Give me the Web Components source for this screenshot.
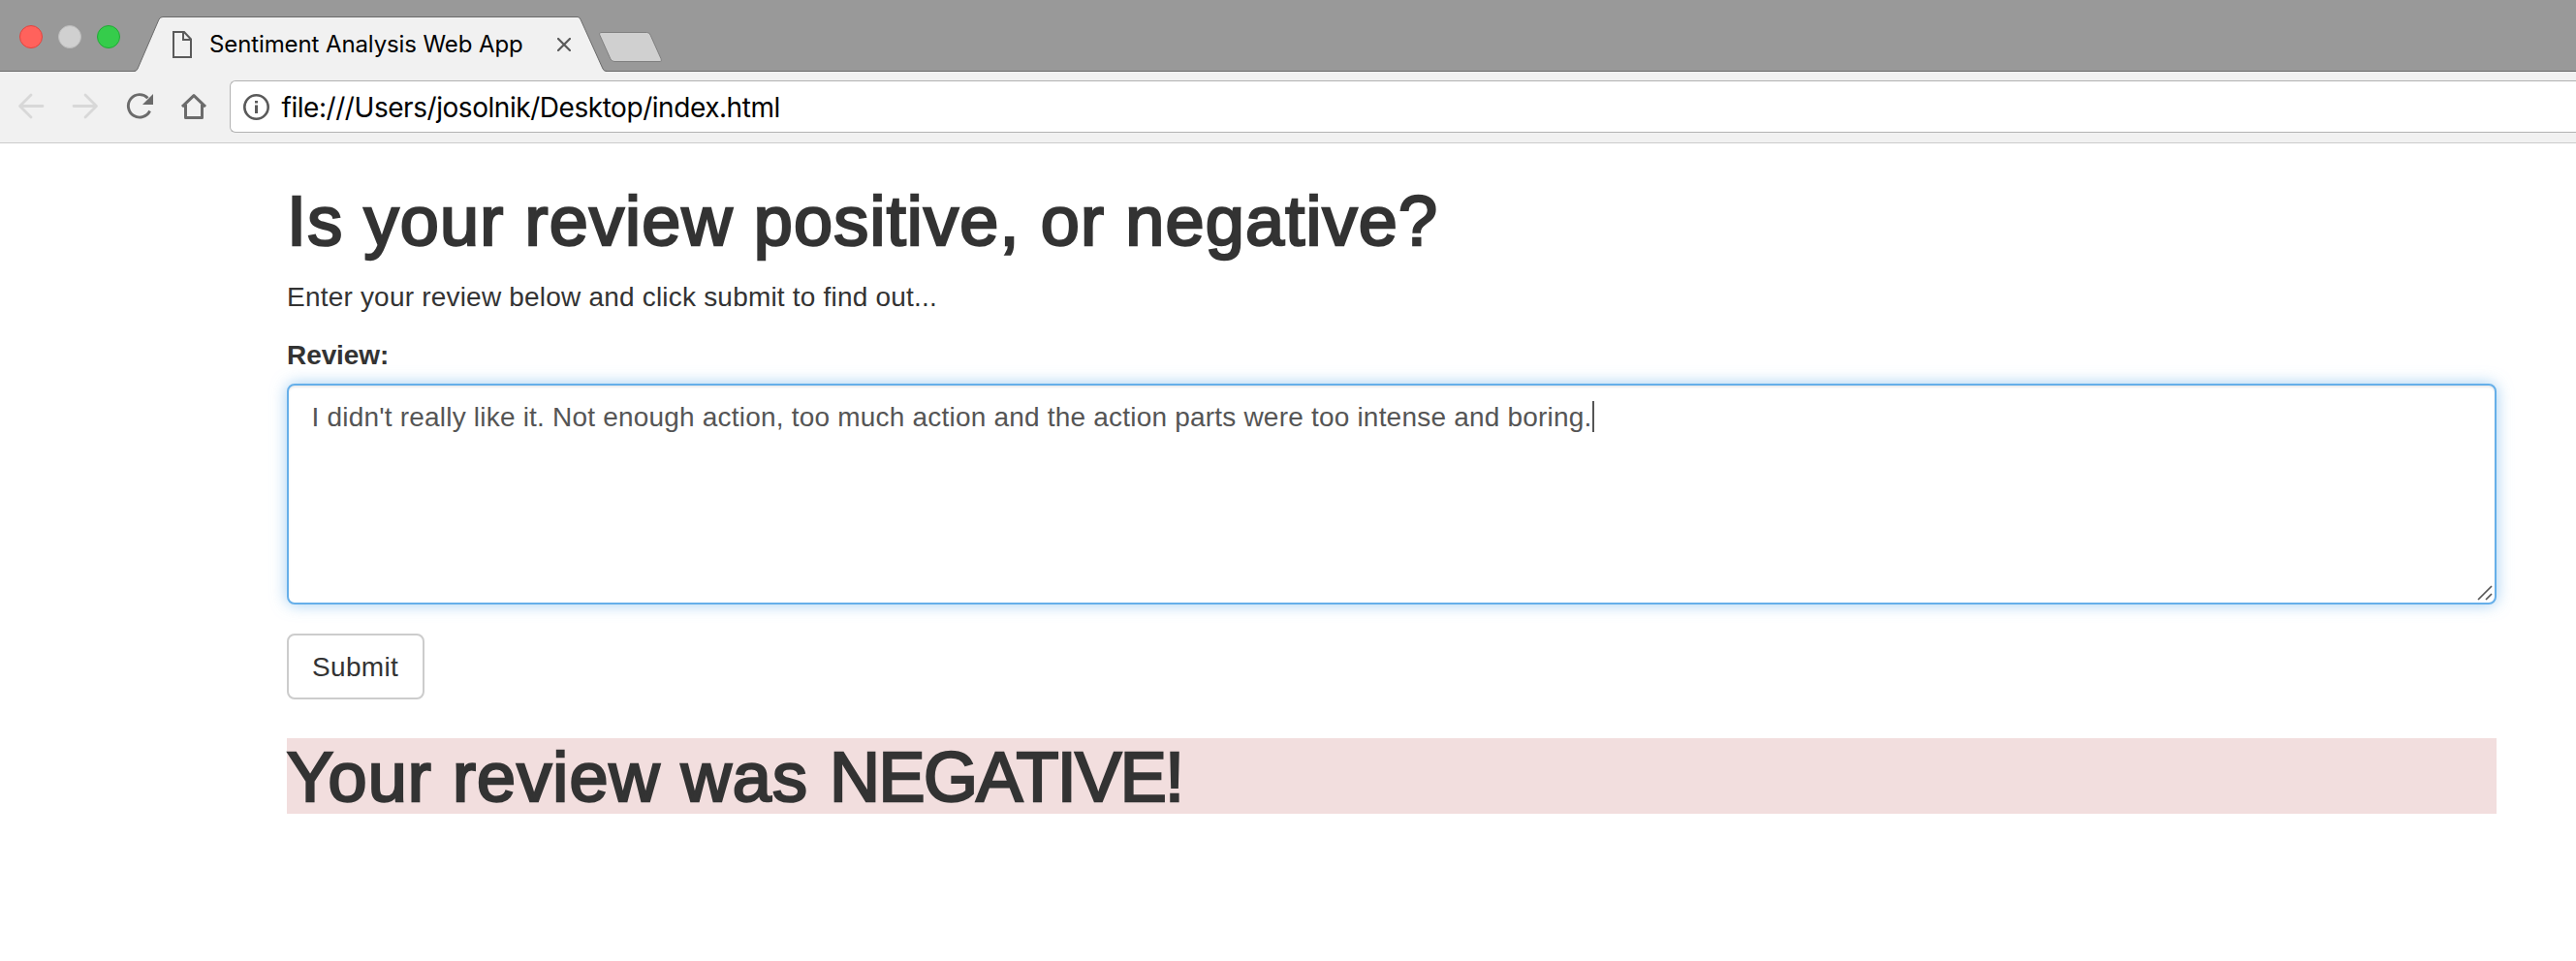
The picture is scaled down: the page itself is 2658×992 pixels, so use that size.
<!DOCTYPE html>
<html lang="en">
<head>
<meta charset="utf-8">
<title>Sentiment Analysis Web App</title>
<style>
html,body{margin:0;background:#fff;overflow:hidden}
body{height:992px;font:28px/40px "Liberation Sans",Arial,sans-serif;color:#333}
</style>
</head>
<body>
<browser-frame>
  <tab-strip slot="tabs"><fit-text start="0" width="322">Sentiment Analysis Web App</fit-text></tab-strip>
  <tool-bar slot="tools"><fit-text start="-0.5" width="513">file:///Users/josolnik/Desktop/index.html</fit-text></tool-bar>
  <review-page></review-page>
</browser-frame>
<script>
const define = (name, html, extra) => customElements.define(name, class extends HTMLElement {
  constructor() {
    super();
    const t = document.createElement('template');
    t.innerHTML = html;
    this.attachShadow({ mode: 'open' }).append(t.content.cloneNode(true));
  }
  connectedCallback() { if (extra) extra(this); }
});

define('browser-frame', `<style>
:host{display:flex;flex-direction:column;width:100%;height:992px}
</style><slot name="tabs"></slot><slot name="tools"></slot><slot></slot>`);

define('tab-strip', `<style>
:host{display:grid;height:74px;background:#999;font:24px/30px Inter,sans-serif;color:#000}
.bg{grid-area:1/1;display:block;width:100%;height:74px}
.row{grid-area:1/1;display:flex;align-items:flex-start;z-index:1}
.lights{width:178px;height:74px}
.doc{width:20px;height:28px;margin-top:32px;margin-right:19px}
.title{width:358px;padding-top:31px}
.x{width:14px;height:14px;margin-top:39px}
</style>
<svg class="bg"><path d="M0 73.5H2658" stroke="#6b6b6b"/>
<path d="M139 74Q141 73 142 71L164 20Q165.300 17.500 168 17.500H596Q598 17.500 599 20L622 71Q623 73.500 625 73.500V74Z" fill="#f1f1f1"/>
<path d="M138 73.500Q141 73.500 142 71L164 20Q165.300 17.500 168 17.500H596Q598 17.500 599 20L622 71Q623 73.500 626 73.500" fill="none" stroke="#6b6b6b"/>
<path d="M621 33.500H667.500Q670 33.500 671 36L682 60.500Q683.500 63.500 681 63.500H634Q631.500 63.500 630 61L619 36.500Q617.500 33.500 621 33.500Z" fill="#d0d0d0" stroke="#808080"/></svg>
<div class="row">
<svg class="lights"><g stroke-width="1"><circle cx="32" cy="38" r="11.500" fill="#ff625c" stroke="#e2443f"/><circle cx="72" cy="38" r="11.500" fill="#d0d0d0" stroke="#bcbcbc"/><circle cx="112" cy="38" r="11.500" fill="#35cc4b" stroke="#22a936"/></g></svg>
<svg class="doc" viewBox="0 0 20 28"><path d="M1 1H12L19 8.500V27H1ZM11 1V9H19" fill="none" stroke="#5a5a5a" stroke-width="2"/></svg>
<div class="title"><slot></slot></div>
<svg class="x" viewBox="0 0 14 14"><path d="M1 1L13 13M13 1L1 13" stroke="#5a5a5a" stroke-width="2.200" stroke-linecap="round"/></svg>
</div>`);

define('tool-bar', `<style>
:host{display:flex;box-sizing:border-box;height:74px;background:#f1f1f1;border-bottom:1px solid #ccc;overflow:hidden;font:28px/34px Inter,sans-serif;color:#000}
.nav{flex:none;width:237px;height:73px}
.omni{flex:1;box-sizing:border-box;height:54px;margin-top:9px;border:1px solid #b2b2b2;border-right:0;border-radius:6px 0 0 6px;background:#fff;display:flex}
.info{width:27px;height:27px;margin:13px 13px 0 13px}
.url{padding-top:10px}
</style>
<svg class="nav" viewBox="0 74 237 73" fill="none">
<g stroke="#d8d8d8" stroke-width="2.800" stroke-linecap="round" stroke-linejoin="round"><path d="M44 109.500H21M32 98L20.500 109.500L32 121"/><path d="M76 109.500H99M88 98L99.500 109.500L88 121"/></g>
<path d="M152.500 101.200A11.700 11.700 0 1 0 154.600 114.500" stroke="#6b6b6b" stroke-width="2.900"/><path d="M158 97V108H147Z" fill="#6b6b6b"/>
<path d="M188 110.200L200 98.600L212 110.200M191.500 108V121.500H208.500V108" stroke="#6b6b6b" stroke-width="3" stroke-linejoin="round"/>
</svg>
<div class="omni"><svg class="info" viewBox="0 0 27 27"><circle cx="13.500" cy="13.500" r="12.200" fill="none" stroke="#5a5a5a" stroke-width="2.600"/><path d="M12 7H15V9.500H12ZM12 11.500H15V20H12Z" fill="#5a5a5a"/></svg>
<div class="url"><slot></slot></div></div>`);

define('review-page', `<style>
:host{display:block;width:2280px;margin-left:296px}
h1{display:flex;box-sizing:border-box;height:79px;padding-top:1px;font-size:72px;line-height:79.200px;font-weight:400;margin:40px 0 20px;-webkit-text-stroke:2.500px #333}
p{margin:0 0 20px}
.label{font-weight:700;margin-bottom:9px}
submit-button{margin-top:30px}
.result{background:#f2dede;margin-top:40px;height:78px}
</style>
<h1><fit-text start="6" width="1179">Is your review positive, or negative?</fit-text></h1>
<p><fit-text start="2" width="667">Enter your review below and click submit to find out...</fit-text></p>
<div class="label"><fit-text start="1" width="102">Review:</fit-text></div>
<review-box><fit-text start="1.500" width="1317">I didn't really like it. Not enough action, too much action and the action parts were too intense and boring.</fit-text></review-box>
<submit-button><fit-text start="1" width="88">Submit</fit-text></submit-button>
<h1 class="result"><fit-text start="1" width="534">Your review was</fit-text> <fit-text start="27" width="355">NEGATIVE!</fit-text></h1>`);

define('review-box', `<style>
:host{display:flex;position:relative;box-sizing:border-box;height:228px;border:2px solid #66afe9;border-radius:8px;padding:13px 24px 11px;color:#555;background:#fff;box-shadow:inset 0 2px 2px rgba(0,0,0,.075),0 0 16px rgba(102,175,233,.6)}
i{width:2px;height:32px;margin:3px 0 0 1px;background:#555}
svg{position:absolute;right:2px;bottom:2px;width:16px;height:16px}
</style><slot></slot><i></i>
<svg viewBox="0 0 16 16"><path d="M1 15L15 1M9 15L15 9" stroke="#555" stroke-width="1.700"/></svg>`);

define('submit-button', `<style>
:host{display:block;box-sizing:border-box;width:142px;height:68px;border:2px solid #ccc;border-radius:8px;padding:13px 24px 11px;background:#fff;color:#333}
</style><slot></slot>`);

// Spreads a line's letters so that its ink spans a given width.
define('fit-text', `<style>:host{display:block;width:max-content;white-space:nowrap}</style><slot></slot>`, el => {
  const s = getComputedStyle(el), c = document.createElement('canvas').getContext('2d');
  c.font = `${s.fontWeight} ${s.fontSize} ${s.fontFamily}`;
  const text = el.textContent, m = c.measureText(text);
  const ink = m.actualBoundingBoxLeft + m.actualBoundingBoxRight;
  el.style.letterSpacing = (el.getAttribute('width') - ink) / (text.length - 1) + 'px';
  el.style.marginLeft = +el.getAttribute('start') + m.actualBoundingBoxLeft + 'px';
});
</script>
</body>
</html>
